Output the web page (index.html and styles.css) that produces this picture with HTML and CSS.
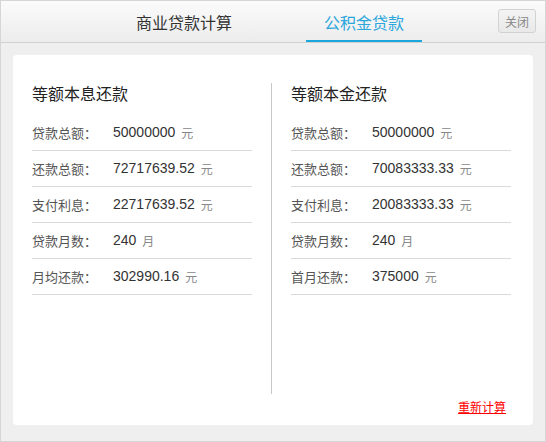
FILE: index.html
```html
<!DOCTYPE html>
<html lang="zh-CN">
<head>
<meta charset="utf-8">
<title>公积金贷款</title>
<link rel="stylesheet" href="styles.css">
</head>
<body>
<div class="app">
  <header class="header">
    <nav class="tabs">
      <span class="tab">商业贷款计算</span>
      <span class="tab active">公积金贷款</span>
    </nav>
    <button class="close">关闭</button>
  </header>
  <main class="main">
    <section class="card">
      <div class="cols">
        <div class="col col-left">
          <h2 class="title">等额本息还款</h2>
          <div class="row"><span class="label">贷款总额：</span><span class="value">50000000</span><span class="unit">元</span></div>
          <div class="row"><span class="label">还款总额：</span><span class="value">72717639.52</span><span class="unit">元</span></div>
          <div class="row"><span class="label">支付利息：</span><span class="value">22717639.52</span><span class="unit">元</span></div>
          <div class="row"><span class="label">贷款月数：</span><span class="value">240</span><span class="unit">月</span></div>
          <div class="row"><span class="label">月均还款：</span><span class="value">302990.16</span><span class="unit">元</span></div>
        </div>
        <div class="col col-right">
          <h2 class="title">等额本金还款</h2>
          <div class="row"><span class="label">贷款总额：</span><span class="value">50000000</span><span class="unit">元</span></div>
          <div class="row"><span class="label">还款总额：</span><span class="value">70083333.33</span><span class="unit">元</span></div>
          <div class="row"><span class="label">支付利息：</span><span class="value">20083333.33</span><span class="unit">元</span></div>
          <div class="row"><span class="label">贷款月数：</span><span class="value">240</span><span class="unit">月</span></div>
          <div class="row"><span class="label">首月还款：</span><span class="value">375000</span><span class="unit">元</span></div>
        </div>
      </div>
      <div class="footer"><a class="recalc" href="#">重新计算</a></div>
    </section>
  </main>
</div>
</body>
</html>
```

FILE: styles.css
```css
* { box-sizing: border-box; }
html, body { margin: 0; padding: 0; }
body {
  font-family: "Liberation Sans", "Noto Sans CJK SC", sans-serif;
  background: #efefef;
}
.app {
  width: 546px;
  height: 442px;
  border: 1px solid #d6d6d6;
  background: #efefef;
  display: flex;
  flex-direction: column;
}
.header {
  height: 42px;
  flex: none;
  display: flex;
  align-items: stretch;
  border-bottom: 1px solid #d2d2d2;
  background: linear-gradient(#fbfbfb, #ececec);
}
.tabs {
  display: flex;
  margin-left: 117px;
  gap: 56px;
}
.tab {
  display: flex;
  align-items: center;
  padding: 2px 18px 0;
  font-size: 16px;
  color: #333;
  border-bottom: 2px solid transparent;
}
.tab.active {
  color: #2aa6dc;
  border-bottom-color: #1ba6de;
}
.close {
  margin: 8px 9px 0 auto;
  align-self: flex-start;
  width: 38px;
  height: 24px;
  padding: 0;
  border: 1px solid #d2d2d2;
  border-radius: 3px;
  background: linear-gradient(#f4f4f4, #e9e9e9);
  color: #888;
  font-family: "Noto Sans CJK SC", sans-serif;
  font-size: 12px;
}
.main {
  flex: 1;
  padding: 12px 12px 16px;
}
.card {
  height: 370px;
  background: #fff;
  border-radius: 4px;
  padding: 28px 22px 0 19px;
}
.cols {
  display: flex;
  height: 311px;
}
.col-left {
  width: 240px;
  padding-right: 19px;
  border-right: 1px solid #c9c9c9;
}
.col-right {
  width: 239px;
  padding-left: 19px;
}
.title {
  margin: 0 0 8px;
  height: 24px;
  line-height: 24px;
  font-size: 16px;
  font-weight: normal;
  color: #222;
}
.row {
  height: 36px;
  display: flex;
  align-items: center;
  border-bottom: 1px solid #dadada;
  padding-bottom: 1px;
}
.label {
  width: 81px;
  flex: none;
  font-size: 13px;
  color: #555;
}
.value {
  font-size: 14px;
  color: #333;
}
.unit {
  margin-left: 6px;
  font-size: 12px;
  color: #888;
}
.footer {
  margin-top: 6px;
  text-align: right;
  padding-right: 5px;
  line-height: 14px;
}
.recalc {
  font-size: 12px;
  color: #f00;
  text-decoration: underline;
}
```
